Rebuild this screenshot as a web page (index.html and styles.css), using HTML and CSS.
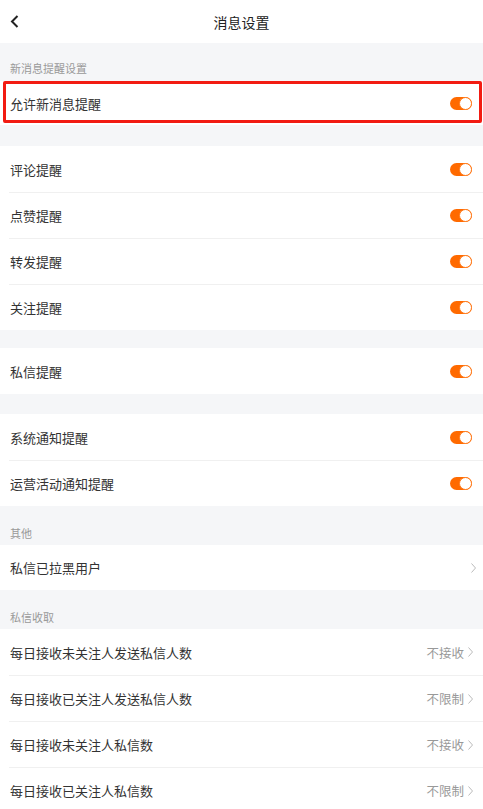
FILE: index.html
```html
<!DOCTYPE html>
<html lang="zh-CN">
<head>
  <meta charset="UTF-8" />
  <meta name="viewport" content="width=device-width, initial-scale=1.0"/>
  <title>消息设置</title>
  <link rel="stylesheet" href="styles.css">
</head>
<body>
  <header class="topbar">
    <span class="back">
      <svg width="9" height="13" viewBox="0 0 9 13"><path d="M7.5 1 L2 6.5 L7.5 12" fill="none" stroke="#222" stroke-width="2"/></svg>
    </span>
    <h1>消息设置</h1>
    <span></span>
  </header>

  <div class="section-title first">新消息提醒设置</div>
  <div class="group">
    <div class="row main highlight"><span>允许新消息提醒</span><i class="toggle"></i></div>
  </div>

  <div class="gap g21"></div>
  <div class="group">
    <div class="row"><span>评论提醒</span><i class="toggle"></i></div>
    <div class="row"><span>点赞提醒</span><i class="toggle"></i></div>
    <div class="row"><span>转发提醒</span><i class="toggle"></i></div>
    <div class="row"><span>关注提醒</span><i class="toggle"></i></div>
  </div>

  <div class="gap g18"></div>
  <div class="group">
    <div class="row"><span>私信提醒</span><i class="toggle"></i></div>
  </div>

  <div class="gap g20"></div>
  <div class="group">
    <div class="row"><span>系统通知提醒</span><i class="toggle"></i></div>
    <div class="row"><span>运营活动通知提醒</span><i class="toggle"></i></div>
  </div>

  <div class="section-title">其他</div>
  <div class="group">
    <div class="row short link"><span>私信已拉黑用户</span><span class="value"><svg class="arrow" width="5" height="10" viewBox="0 0 5 10"><path d="M0.5 0.5 L4.5 5 L0.5 9.5" fill="none" stroke="#bbb" stroke-width="1"/></svg></span></div>
  </div>

  <div class="section-title">私信收取</div>
  <div class="group">
    <div class="row link"><span>每日接收未关注人发送私信人数</span><span class="value">不接收<svg class="arrow" width="5" height="10" viewBox="0 0 5 10"><path d="M0.5 0.5 L4.5 5 L0.5 9.5" fill="none" stroke="#bbb" stroke-width="1"/></svg></span></div>
    <div class="row link"><span>每日接收已关注人发送私信人数</span><span class="value">不限制<svg class="arrow" width="5" height="10" viewBox="0 0 5 10"><path d="M0.5 0.5 L4.5 5 L0.5 9.5" fill="none" stroke="#bbb" stroke-width="1"/></svg></span></div>
    <div class="row link"><span>每日接收未关注人私信数</span><span class="value">不接收<svg class="arrow" width="5" height="10" viewBox="0 0 5 10"><path d="M0.5 0.5 L4.5 5 L0.5 9.5" fill="none" stroke="#bbb" stroke-width="1"/></svg></span></div>
    <div class="row link"><span>每日接收已关注人私信数</span><span class="value">不限制<svg class="arrow" width="5" height="10" viewBox="0 0 5 10"><path d="M0.5 0.5 L4.5 5 L0.5 9.5" fill="none" stroke="#bbb" stroke-width="1"/></svg></span></div>
  </div>
</body>
</html>
```

FILE: styles.css
```css
body {
  margin: 0;
  background: #f5f6f8;
  color: #333;
  font-family: "Noto Sans CJK SC", "Noto Sans", sans-serif;
}

.topbar {
  display: grid;
  grid-template-columns: 40px 1fr 40px;
  align-items: center;
  height: 43px;
  background: #fff;
}

.topbar h1 {
  margin: 0;
  font-size: 14px;
  font-weight: normal;
  text-align: center;
  color: #222;
}

.back {
  display: flex;
  padding-left: 10px;
}

.section-title {
  height: 39px;
  box-sizing: border-box;
  display: flex;
  align-items: flex-end;
  padding: 0 0 4px 10px;
  font-size: 11px;
  color: #999;
}

.section-title.first {
  height: 38px;
  padding-bottom: 5px;
}

.gap.g21 { height: 21px; }
.gap.g18 { height: 18px; }
.gap.g20 { height: 20px; }

.group {
  background: #fff;
}

.row {
  display: flex;
  align-items: center;
  justify-content: space-between;
  height: 46px;
  box-sizing: border-box;
  margin-left: 9px;
  padding: 0 11px 0 1px;
  font-size: 13px;
}

.row + .row {
  border-top: 1px solid #f0f0f0;
}

.row.link {
  padding-right: 10px;
}

.row.main {
  height: 44px;
}

.row.short {
  height: 45px;
}

.row.short .arrow {
  margin-right: -3px;
}

.highlight {
  position: relative;
}

.highlight::after {
  content: "";
  position: absolute;
  left: -6px;
  right: 1px;
  top: 0;
  bottom: 2px;
  border: 3px solid #f21b12;
  border-radius: 2px;
}

.toggle {
  position: relative;
  width: 22px;
  height: 13px;
  border-radius: 7px;
  background: #ff6a00;
}

.toggle::after {
  content: "";
  position: absolute;
  right: 0;
  top: 0;
  width: 11px;
  height: 11px;
  border-radius: 50%;
  background: #fff;
  border: 1px solid #ff7a1a;
}

.value {
  display: flex;
  align-items: center;
  gap: 4px;
  font-size: 12.5px;
  color: #999;
}
```
